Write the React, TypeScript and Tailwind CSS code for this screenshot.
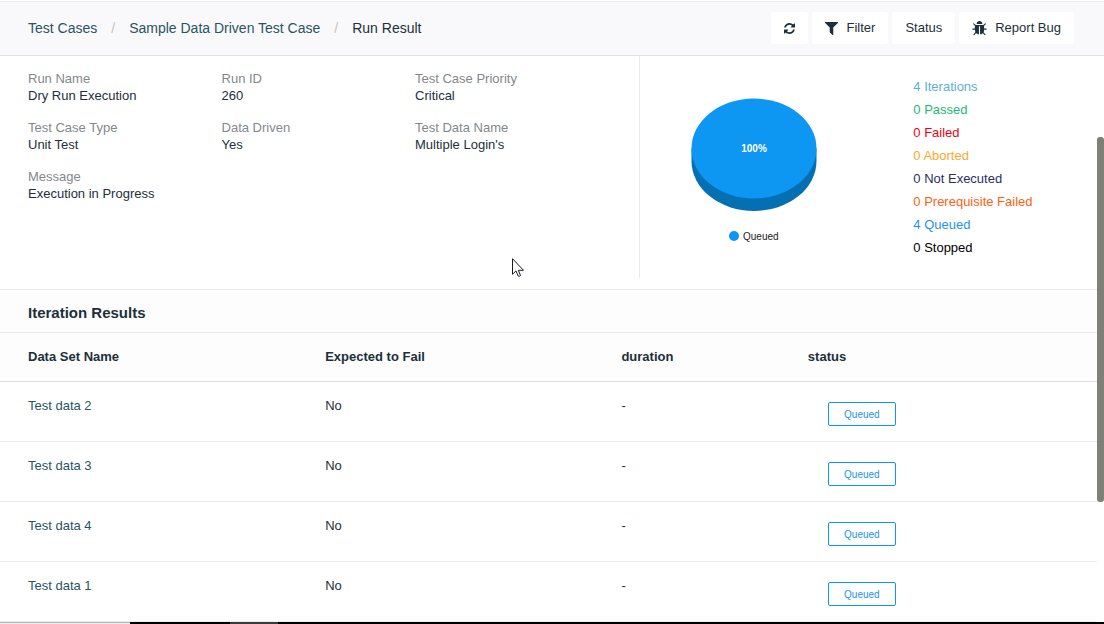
import type { ReactNode } from "react";

interface Detail {
  label: string;
  value: string;
}

interface Stat {
  count: number;
  name: string;
  classNames: string;
}

interface Iteration {
  name: string;
  expectedToFail: string;
  duration: string;
  status: string;
}

const details: Detail[] = [
  { label: "Run Name", value: "Dry Run Execution" },
  { label: "Run ID", value: "260" },
  { label: "Test Case Priority", value: "Critical" },
  { label: "Test Case Type", value: "Unit Test" },
  { label: "Data Driven", value: "Yes" },
  { label: "Test Data Name", value: "Multiple Login's" },
  { label: "Message", value: "Execution in Progress" },
];

const stats: Stat[] = [
  { count: 4, name: "Iterations", classNames: "text-[#5fb0d3]" },
  { count: 0, name: "Passed", classNames: "text-[#1bb978]" },
  { count: 0, name: "Failed", classNames: "text-[#f00014]" },
  { count: 0, name: "Aborted", classNames: "text-[#fba92f]" },
  { count: 0, name: "Not Executed", classNames: "text-[#2b2f5e]" },
  { count: 0, name: "Prerequisite Failed", classNames: "text-[#ff5f0f]" },
  { count: 4, name: "Queued", classNames: "text-[#1c93ee]" },
  { count: 0, name: "Stopped", classNames: "text-black" },
];

const iterations: Iteration[] = [
  { name: "Test data 2", expectedToFail: "No", duration: "-", status: "Queued" },
  { name: "Test data 3", expectedToFail: "No", duration: "-", status: "Queued" },
  { name: "Test data 4", expectedToFail: "No", duration: "-", status: "Queued" },
  { name: "Test data 1", expectedToFail: "No", duration: "-", status: "Queued" },
];

// Icons
const RefreshIcon = () => (
  <svg viewBox="0 0 1536 1536" className="size-[11px]" fill="currentColor" aria-hidden="true">
    <path d="M1511 928q0 5-1 7-64 268-268 434.5t-478 166.5q-146 0-282.5-55t-243.5-157l-129 129q-19 19-45 19t-45-19-19-45v-448q0-26 19-45t45-19h448q26 0 45 19t19 45-19 45l-137 137q71 66 161 102t187 36q134 0 250-65t186-179q11-17 53-117 8-23 30-23h192q13 0 22.5 9.5t9.5 22.5zm25-800v448q0 26-19 45t-45 19h-448q-26 0-45-19t-19-45 19-45l138-138q-148-137-349-137-134 0-250 65t-186 179q-11 17-53 117-8 23-30 23h-199q-13 0-22.5-9.5t-9.5-22.5v-7q65-268 270-434.5t480-166.5q146 0 284 55.5t245 156.5l130-129q19-19 45-19t45 19 19 45z" />
  </svg>
);

const FilterIcon = () => (
  <svg viewBox="192 256 1408 1408" className="size-[13px]" fill="currentColor" aria-hidden="true">
    <path d="M1595 295q17 41-14 70l-493 493v742q0 42-39 59-13 5-25 5-27 0-45-19l-256-256q-19-19-19-45v-486l-493-493q-31-29-14-70 17-39 59-39h1280q42 0 59 39z" />
  </svg>
);

const BugIcon = () => (
  <svg viewBox="64 64 1664 1664" className="size-[15px]" fill="currentColor" aria-hidden="true">
    <path d="M1696 960q0 26-19 45t-45 19h-224q0 171-67 290l208 209q19 19 19 45t-19 45q-18 19-45 19t-45-19l-198-197q-5 5-15 13t-42 28.5-65 36.5-82 29-97 13v-896h-128v896q-51 0-101.5-13.5t-87-33-66-39-43.5-32.5l-15-14-183 207q-20 21-48 21-24 0-43-16-19-18-20.5-44.5t15.5-46.5l202-227q-58-114-58-274h-224q-26 0-45-19t-19-45 19-45 45-19h224v-294l-173-173q-19-19-19-45t19-45 45-19 45 19l173 173h844l173-173q19-19 45-19t45 19 19 45-19 45l-173 173v294h224q26 0 45 19t19 45zm-480-576h-640q0-133 93.5-226.5t226.5-93.5 226.5 93.5 93.5 226.5z" />
  </svg>
);

const HeaderBtn = ({ label, icon, children }: { label: string; icon?: ReactNode; children?: ReactNode }) => (
  <button
    type="button"
    aria-label={label}
    className="flex h-8 items-center gap-2 rounded-[3px] bg-white px-[13px] text-[13px] text-[#1c2f3a]"
  >
    {icon}
    {children}
  </button>
);

const Header = () => (
  <header className="flex items-center justify-between border-y border-t-[#e9ecec] border-b-[#dbe3e5] bg-[#f9f9fb] pt-[10px] pr-[30px] pb-[11px] pl-7">
    <nav className="flex gap-[14px] text-sm text-[#2a5364]">
      <a href="#test-cases">Test Cases</a>
      <span className="text-[#c4c4c4]">/</span>
      <a href="#sample">Sample Data Driven Test Case</a>
      <span className="text-[#c4c4c4]">/</span>
      <span className="text-[#1c2f3a]">Run Result</span>
    </nav>
    <div className="flex gap-1">
      <HeaderBtn label="Refresh" icon={<RefreshIcon />} />
      <HeaderBtn label="Filter" icon={<FilterIcon />}>
        Filter
      </HeaderBtn>
      <HeaderBtn label="Status">Status</HeaderBtn>
      <HeaderBtn label="Report Bug" icon={<BugIcon />}>
        Report Bug
      </HeaderBtn>
    </div>
  </header>
);

const PieChart = () => (
  <svg viewBox="0 0 130 150" className="h-[150px] w-[130px]" role="img" aria-label="Queued 100%">
    <path d="M2.500 50.500v12.500a62.500 50 0 0 0 125 0v-12.500z" fill="#0470b2" />
    <ellipse cx="65" cy="50.500" rx="62.500" ry="50" fill="#0e96f3" />
    <text x="65" y="54" textAnchor="middle" fill="#ffffff" className="text-[10px] font-bold">
      100%
    </text>
    <circle cx="45" cy="138" r="5" fill="#0e96f3" />
    <text x="54" y="142" fill="#222222" className="text-[10px]">
      Queued
    </text>
  </svg>
);

const Summary = () => (
  <section className="flex border-b border-[#ebebeb] pb-[11px]">
    <dl className="grid w-[58.3%] grid-cols-3 content-start gap-y-[15px] border-r border-[#ebebeb] pt-[14px] pr-[30px] pl-7 leading-[17px]">
      {details.map((item) => (
        <div key={item.label}>
          <dt className="text-[#83888c]">{item.label}</dt>
          <dd>{item.value}</dd>
        </div>
      ))}
    </dl>
    <div className="flex flex-1 pt-[19px] pb-[19px]">
      <div className="flex w-1/2 justify-center pt-[23px]">
        <PieChart />
      </div>
      <ul className="pl-[45px] leading-[23px]">
        {stats.map((stat) => (
          <li key={stat.name} className={stat.classNames}>
            {stat.count} {stat.name}
          </li>
        ))}
      </ul>
    </div>
  </section>
);

const IterationTable = () => (
  <section>
    <h2 className="border-b border-[#ebebeb] bg-[#fdfdfd] px-7 pt-[14px] pb-[10px] text-[15px] leading-[18px] font-bold">
      Iteration Results
    </h2>
    <table className="w-full table-fixed border-separate border-spacing-0 text-left leading-[17px]">
      <thead className="bg-[#fdfdfd]">
        <tr className="[&>th]:border-b [&>th]:border-[#dcdfdf] [&>th]:pt-[15px] [&>th]:pb-4 [&>th]:pl-[29px] [&>th:first-child]:pl-7">
          <th className="w-[27%]">Data Set Name</th>
          <th className="w-[27%]">Expected to Fail</th>
          <th className="w-[17%]">duration</th>
          <th className="w-[29%]">status</th>
        </tr>
      </thead>
      <tbody>
        {iterations.map((row) => (
          <tr
            key={row.name}
            className="align-top [&>td]:border-b [&>td]:border-[#ebebeb] [&>td]:pt-[15px] [&>td]:pl-[29px] [&>td:first-child]:pl-7"
          >
            <td>
              <a href="#iteration" className="text-[#2a5364]">
                {row.name}
              </a>
            </td>
            <td>{row.expectedToFail}</td>
            <td>{row.duration}</td>
            <td className="pb-[15px]">
              <span className="mt-[5px] ml-5 flex h-6 w-[68px] items-center justify-center rounded-[2px] border border-[#0e96f3] text-[10px] text-[#1c93ee]">
                {row.status}
              </span>
            </td>
          </tr>
        ))}
      </tbody>
    </table>
  </section>
);

const App = () => {
  return (
    <div className="relative flex h-screen flex-col overflow-hidden bg-white pt-px font-['Liberation_Sans',Arial,sans-serif] text-[13px] text-[#1c2f3a]">
      <Header />
      <main className="min-h-0 flex-1 overflow-hidden pr-[7px]">
        <Summary />
        <IterationTable />
      </main>

      {/* Scroll thumb */}
      <div className="absolute top-[22%] right-0 h-[58.5%] w-[7px] rounded-[3px] bg-[#7f7f78]" />

      {/* Taskbar edge */}
      <div className="flex h-[2px] shrink-0">
        <div className="w-[130px] border-t border-[#b4b4b4] bg-[#eeeeee]" />
        <div className="w-[100px] bg-black" />
        <div className="w-12 bg-[#3a3a3a]" />
        <div className="flex-1 bg-black" />
      </div>

      {/* Mouse pointer */}
      <svg viewBox="0 0 12 19" className="absolute top-[258px] left-[512px] h-[19px] w-3" aria-hidden="true">
        <path
          d="M.5.7v15.600l3.500-3.400 2.200 5.100q1 .7 2.300-.4L6.400 12.300h5.100z"
          fill="#ffffff"
          stroke="#1a1a24"
          strokeWidth="1"
        />
      </svg>
    </div>
  );
};

export default App;
